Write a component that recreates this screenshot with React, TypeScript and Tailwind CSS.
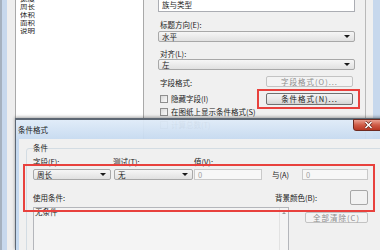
import type { ReactNode } from 'react'

function Combo({ text, className }: { text: string; className: string }) {
  return (
    <div
      className={`flex shrink-0 items-center justify-between rounded-[2px] border border-[#a8a8a8] bg-gradient-to-b from-[#f6f6f6] to-[#e1e1e1] pl-[3px] pr-[4px] ${className}`}
    >
      <span>{text}</span>
      <span className="h-0 w-0 border-x-[3px] border-t-[3px] border-x-transparent border-t-[#1a1a1a]" />
    </div>
  )
}

function Btn({ children, disabled, className }: { children: ReactNode; disabled?: boolean; className: string }) {
  return (
    <div
      className={`flex shrink-0 items-center justify-center rounded-[2px] border tracking-[1px] ${
        disabled
          ? 'border-[#c3c3c3] bg-[#f3f3f3] text-[#8c8c8c]'
          : 'border-[#707070] bg-gradient-to-b from-[#f3f3f3] via-[#e9e9e9] to-[#d4d4d4] text-[#1a1a1a]'
      } ${className}`}
    >
      {children}
    </div>
  )
}

function Check({ label, className = '' }: { label: string; className?: string }) {
  return (
    <div className={`ml-[2px] flex shrink-0 items-center gap-[3px] ${className}`}>
      <span className="h-[8px] w-[8px] border border-[#8f8f8f] bg-gradient-to-br from-[#d8d8d8] to-[#fbfbfb]" />
      <span>{label}</span>
    </div>
  )
}

function DisabledInput({ className }: { className: string }) {
  return (
    <div className={`flex shrink-0 items-center border border-[#c9c9c9] bg-[#f7f7f7] pl-[3px] text-[#a0a0a0] ${className}`}>
      0
    </div>
  )
}

export default function App() {
  return (
    <div className="relative h-[250px] w-[380px] overflow-hidden bg-[#f0f0f0] font-['Noto_Sans_CJK_SC','Noto_Sans',sans-serif] text-[7.5px] leading-[8px] text-[#1a1a1a]">
      {/* back window: 族 / 字段 properties */}
      <div className="flex h-full">
        <div className="w-[2px] shrink-0 bg-[#a5b1bf]" />
        <div className="w-[5px] shrink-0 bg-[#c7d8ed]" />
        <div className="w-[8px] shrink-0 bg-[#eeeeee]" />
        <div className="w-[129px] shrink-0 overflow-hidden border-x border-[#a9a9a9] bg-white pl-[4px]">
          {/* rows are squashed vertically in the source shot */}
          <div className="-mt-[6px] flex origin-top scale-y-[0.73] flex-col text-[7.5px] leading-[11px]">
            <span>宽度</span>
            <span>周长</span>
            <span>体积</span>
            <span>面积</span>
            <span>说明</span>
          </div>
        </div>
        <div className="flex w-[221px] shrink-0 flex-col pl-[14px] pr-[10px]">
          <div className="-mt-[2px] flex h-[14px] shrink-0 items-center border border-[#abadb3] bg-white pl-[3px]">族与类型</div>
          <div className="ml-[2px] mt-[8px] flex h-[10px] shrink-0 items-center">标题方向(E):</div>
          <Combo text="水平" className="mt-[1px] h-[11px]" />
          <div className="ml-[2px] mt-[7px] flex h-[10px] shrink-0 items-center">对齐(L):</div>
          <Combo text="左" className="h-[11px]" />
          <div className="mt-[6px] flex h-[11px] shrink-0 items-center justify-between">
            <span className="ml-[2px] mt-[2px]">字段格式:</span>
            <Btn disabled className="mr-[2px] h-[11px] w-[87px]">
              字段格式(O)...
            </Btn>
          </div>
          <div className="mt-[6px] flex h-[12px] shrink-0 items-center justify-between">
            <Check label="隐藏字段(I)" />
            <Btn className="mr-[2px] h-[12px] w-[87px]">条件格式(N)...</Btn>
          </div>
          <Check label="在图纸上显示条件格式(S)" className="mt-[1px] h-[11px]" />
          <Check label="计算总数(T)" className="mt-[2px] h-[11px]" />
        </div>
        <div className="w-px shrink-0 bg-[#b9b9b9]" />
        <div className="w-[7px] shrink-0 bg-[#f0f0f0]" />
        <div className="w-[7px] shrink-0 bg-[#c7d8ed]" />
      </div>

      {/* front dialog: 条件格式 */}
      <div className="absolute left-[15px] top-[118px] flex h-[132px] w-[380px] flex-col border-l border-t-2 border-[#5d6773] shadow-[0_-1px_3px_rgba(0,0,0,0.35)]">
        <div className="relative flex h-[19px] shrink-0 items-center bg-gradient-to-b from-[#dfebf8]/95 to-[#c6daf0]/95 pl-[2px]">
          <span>条件格式</span>
          <div className="absolute -top-[1px] left-[337px] flex h-[12px] w-[31px] items-center justify-center rounded-b-[3px] border border-[#6e2a20] bg-gradient-to-b from-[#e9a091] via-[#cf5b46] to-[#b73824]">
            <svg width="9" height="8" viewBox="0 0 9 8">
              <path d="M1.5 1 L7.5 7 M7.5 1 L1.5 7" stroke="#5a1a10" strokeWidth="2.6" />
              <path d="M1.5 1 L7.5 7 M7.5 1 L1.5 7" stroke="#ffffff" strokeWidth="1.6" />
            </svg>
          </div>
        </div>
        <div className="flex min-h-0 flex-1 overflow-hidden">
          <div className="w-[3px] shrink-0 bg-[#c6daf0]" />
          <div className="min-w-0 flex-1 bg-[#f0f0f0]">
            <fieldset className="ml-[7px] mt-[5px] h-[130px] w-[400px] rounded-[3px] border border-[#d3dce3] pl-[6px]">
              <legend className="px-0 leading-[8px]">条件</legend>
              <div className="mt-[6px] flex h-[8px] items-center">
                <span className="w-[80px] shrink-0">字段(F):</span>
                <span className="w-[81px] shrink-0">测试(T):</span>
                <span>值(V):</span>
              </div>
              <div className="mt-[3px] flex h-[11px]">
                <Combo text="周长" className="h-[11px] w-[78px]" />
                <Combo text="无" className="ml-[3px] h-[11px] w-[79px]" />
                <DisabledInput className="ml-[1px] h-[11px] w-[68px]" />
                <span className="ml-[10px] flex w-[30px] shrink-0 items-center">与(A)</span>
                <DisabledInput className="h-[11px] w-[66px]" />
              </div>
              <div className="mt-[10px] flex h-[15px] items-center">
                <span className="w-[242px] shrink-0">使用条件:</span>
                <span className="w-[75px] shrink-0">背景颜色(B):</span>
                <span className="h-[15px] w-[18px] shrink-0 rounded-[2px] border border-[#a7a7a7] bg-[#f2f2f2]" />
              </div>
              <div className="mt-[2px] flex items-start">
                <div className="flex h-[60px] w-[256px] shrink-0 border border-[#b4b6bb] bg-[#f4f4f4]">
                  <span className="flex-1 pl-[1px]">无条件</span>
                  <div className="flex w-[9px] justify-center border-l border-[#e2e2e2] pt-[4px]">
                    <span className="h-0 w-0 border-x-[2px] border-b-[2px] border-x-transparent border-b-[#9a9a9a]" />
                  </div>
                </div>
                <Btn disabled className="ml-[16px] mt-[5px] h-[11px] w-[63px]">
                  全部清除(C)
                </Btn>
              </div>
            </fieldset>
          </div>
        </div>
      </div>

      {/* red annotation frames */}
      <div className="absolute left-[257px] top-[89px] h-[20px] w-[103px] border-2 border-[#e8413d]" />
      <div className="absolute left-[23px] top-[164px] h-[48px] w-[352px] border-2 border-[#e8413d]" />
    </div>
  )
}
